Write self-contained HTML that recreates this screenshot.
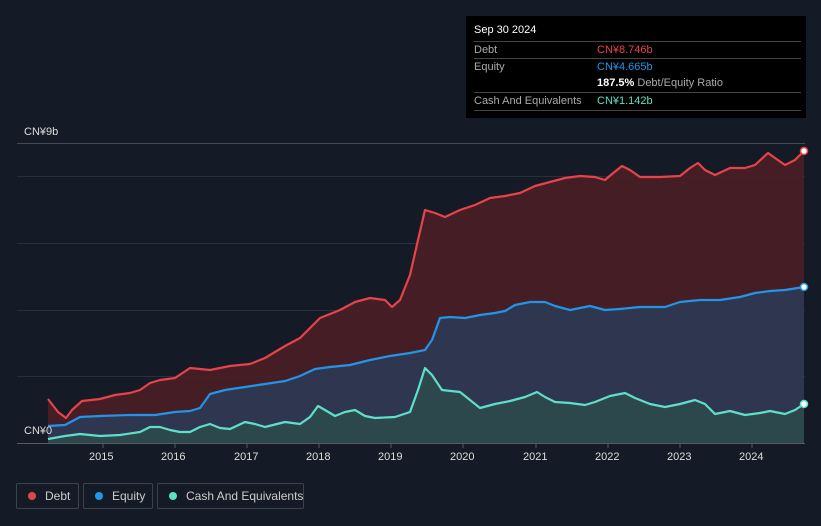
<!DOCTYPE html>
<html><head><meta charset="utf-8"><style>
html,body{margin:0;width:821px;height:526px;overflow:hidden}
body{background:#151b26;font-family:"Liberation Sans",sans-serif;position:relative}
.tt{position:absolute;left:466px;top:16px;width:340px;height:102px;background:#000;color:#fff;font-size:11px}
.row{position:absolute;left:8px;width:327px;border-top:1px solid #444;height:17px;line-height:17px;white-space:nowrap}
.row span{position:absolute;left:123px}
.lab{color:#aaa}
.lg{position:absolute;top:483px;height:26px;border:1px solid #3c424c;border-radius:2px;color:#ccc;font-size:12px;line-height:24px;box-sizing:border-box;white-space:nowrap}
.lg i{position:absolute;left:11px;top:8px;width:8px;height:8px;border-radius:50%}
.lg b{font-weight:normal;position:absolute;white-space:nowrap}
.ax{position:absolute;color:#ddd;font-size:11px;white-space:nowrap}
</style></head><body>
<svg width="821" height="526" style="position:absolute;left:0;top:0">
<g stroke="#2a303a" stroke-width="1">
<line x1="17" x2="805" y1="143.5" y2="143.5" stroke="#444a55"/>
<line x1="17" x2="805" y1="176.5" y2="176.5"/>
<line x1="17" x2="805" y1="243.5" y2="243.5"/>
<line x1="17" x2="805" y1="310.5" y2="310.5"/>
<line x1="17" x2="805" y1="376.5" y2="376.5"/>
</g>
<path d="M48,399 L58,412 L66,418 L72,410 L82,401 L100,399 L115,395 L130,393 L140,390 L150,383 L160,380 L175,378 L190,368 L210,370 L230,366 L250,364 L265,358 L285,346 L300,338 L320,318 L340,310 L355,302 L370,298 L385,300 L392,307 L400,300 L410,275 L418,240 L425,210 L435,213 L445,217 L460,210 L475,205 L490,198 L505,196 L520,193 L535,186 L550,182 L565,178 L580,176 L595,177 L605,180 L612,174 L622,166 L630,170 L640,177 L660,177 L680,176 L690,168 L698,163 L705,170 L715,175 L730,168 L745,168 L755,165 L768,153 L775,158 L785,165 L795,160 L804,151 L804,443 L48,443Z" fill="#4a1f26" fill-opacity="0.9"/>
<path d="M48,426 L65,425 L80,417 L100,416 L130,415 L155,415 L175,412 L190,411 L200,408 L210,394 L225,390 L245,387 L265,384 L285,381 L300,376 L315,369 L330,367 L350,365 L370,360 L390,356 L410,353 L425,350 L432,340 L440,318 L450,317 L465,318 L480,315 L495,313 L505,311 L515,305 L530,302 L545,302 L555,306 L570,310 L580,308 L590,306 L605,310 L620,309 L640,307 L665,307 L680,302 L700,300 L720,300 L740,297 L755,293 L770,291 L785,290 L804,287 L804,443 L48,443Z" fill="#2c3a55" fill-opacity="0.9"/>
<path d="M48,439 L65,436 L80,434 L100,436 L120,435 L140,432 L150,427 L160,427 L170,430 L180,432 L190,432 L200,427 L210,424 L220,428 L230,429 L245,422 L255,424 L265,427 L285,422 L300,424 L310,417 L318,406 L325,410 L335,416 L345,412 L355,410 L365,416 L375,418 L395,417 L410,412 L418,390 L425,368 L432,375 L442,390 L460,392 L470,400 L480,408 L495,404 L510,401 L525,397 L537,392 L545,397 L555,402 L570,403 L585,405 L595,402 L610,396 L625,393 L635,398 L650,404 L665,407 L680,404 L695,400 L705,404 L715,414 L730,411 L745,415 L760,413 L770,411 L785,414 L795,410 L804,404 L804,443 L48,443Z" fill="#2d4a4c" fill-opacity="0.9"/>
<g fill="none" stroke-width="2.2" stroke-linejoin="round">
<path stroke="#e8424a" d="M48,399 L58,412 L66,418 L72,410 L82,401 L100,399 L115,395 L130,393 L140,390 L150,383 L160,380 L175,378 L190,368 L210,370 L230,366 L250,364 L265,358 L285,346 L300,338 L320,318 L340,310 L355,302 L370,298 L385,300 L392,307 L400,300 L410,275 L418,240 L425,210 L435,213 L445,217 L460,210 L475,205 L490,198 L505,196 L520,193 L535,186 L550,182 L565,178 L580,176 L595,177 L605,180 L612,174 L622,166 L630,170 L640,177 L660,177 L680,176 L690,168 L698,163 L705,170 L715,175 L730,168 L745,168 L755,165 L768,153 L775,158 L785,165 L795,160 L804,151"/>
<path stroke="#2394e8" d="M48,426 L65,425 L80,417 L100,416 L130,415 L155,415 L175,412 L190,411 L200,408 L210,394 L225,390 L245,387 L265,384 L285,381 L300,376 L315,369 L330,367 L350,365 L370,360 L390,356 L410,353 L425,350 L432,340 L440,318 L450,317 L465,318 L480,315 L495,313 L505,311 L515,305 L530,302 L545,302 L555,306 L570,310 L580,308 L590,306 L605,310 L620,309 L640,307 L665,307 L680,302 L700,300 L720,300 L740,297 L755,293 L770,291 L785,290 L804,287"/>
<path stroke="#5ee0c8" d="M48,439 L65,436 L80,434 L100,436 L120,435 L140,432 L150,427 L160,427 L170,430 L180,432 L190,432 L200,427 L210,424 L220,428 L230,429 L245,422 L255,424 L265,427 L285,422 L300,424 L310,417 L318,406 L325,410 L335,416 L345,412 L355,410 L365,416 L375,418 L395,417 L410,412 L418,390 L425,368 L432,375 L442,390 L460,392 L470,400 L480,408 L495,404 L510,401 L525,397 L537,392 L545,397 L555,402 L570,403 L585,405 L595,402 L610,396 L625,393 L635,398 L650,404 L665,407 L680,404 L695,400 L705,404 L715,414 L730,411 L745,415 L760,413 L770,411 L785,414 L795,410 L804,404"/>
</g>
<circle cx="804" cy="151" r="3.5" fill="#fff" stroke="#e8424a" stroke-width="1.5"/>
<circle cx="804" cy="287" r="3.5" fill="#fff" stroke="#2394e8" stroke-width="1.5"/>
<circle cx="804" cy="404" r="3.5" fill="#fff" stroke="#5ee0c8" stroke-width="1.5"/>
<line x1="17" x2="805" y1="443.5" y2="443.5" stroke="#555b66"/>
<g stroke="#555b66"><line x1="103" x2="103" y1="443" y2="448"/><line x1="175" x2="175" y1="443" y2="448"/><line x1="247" x2="247" y1="443" y2="448"/><line x1="319" x2="319" y1="443" y2="448"/><line x1="391" x2="391" y1="443" y2="448"/><line x1="463" x2="463" y1="443" y2="448"/><line x1="536" x2="536" y1="443" y2="448"/><line x1="608" x2="608" y1="443" y2="448"/><line x1="680" x2="680" y1="443" y2="448"/><line x1="752" x2="752" y1="443" y2="448"/></g>
</svg>
<div class="ax" style="left:24px;top:126px">CN¥9b</div>
<div class="ax" style="left:24px;top:425px">CN¥0</div>
<div class="ax" style="left:89px;top:451px">2015</div>
<div class="ax" style="left:161px;top:451px">2016</div>
<div class="ax" style="left:234px;top:451px">2017</div>
<div class="ax" style="left:306px;top:451px">2018</div>
<div class="ax" style="left:378px;top:451px">2019</div>
<div class="ax" style="left:450px;top:451px">2020</div>
<div class="ax" style="left:523px;top:451px">2021</div>
<div class="ax" style="left:595px;top:451px">2022</div>
<div class="ax" style="left:667px;top:451px">2023</div>
<div class="ax" style="left:739px;top:451px">2024</div>
<div class="tt">
<div style="position:absolute;left:8px;top:8px;font-size:11px">Sep 30 2024</div>
<div class="row" style="top:25px"><b class="lab" style="font-weight:normal">Debt</b><span style="color:#e8424a">CN¥8.746b</span></div>
<div class="row" style="top:42px"><b class="lab" style="font-weight:normal">Equity</b><span style="color:#2394e8">CN¥4.665b</span></div>
<div class="row" style="top:59px;border-top:none"><span><b>187.5%</b> <i class="lab" style="font-style:normal">Debt/Equity Ratio</i></span></div>
<div class="row" style="top:76px"><b class="lab" style="font-weight:normal">Cash And Equivalents</b><span style="color:#5ee0c8">CN¥1.142b</span></div>
<div class="row" style="top:94px;height:0"></div>
</div>
<div class="lg" style="left:16px;width:63px"><i style="background:#e8424a"></i><b style="left:28px">Debt</b></div>
<div class="lg" style="left:83px;width:70px"><i style="background:#2394e8"></i><b style="left:28px">Equity</b></div>
<div class="lg" style="left:157px;width:147px"><i style="background:#5ee0c8"></i><b style="left:28px">Cash And Equivalents</b></div>
</body></html>
